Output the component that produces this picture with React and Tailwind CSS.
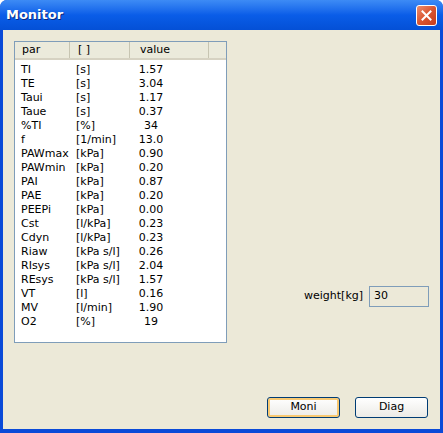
import React from 'react';

const rows = [
  ['TI', '[s]', '1.57'],
  ['TE', '[s]', '3.04'],
  ['Taui', '[s]', '1.17'],
  ['Taue', '[s]', '0.37'],
  ['%TI', '[%]', '34'],
  ['f', '[1/min]', '13.0'],
  ['PAWmax', '[kPa]', '0.90'],
  ['PAWmin', '[kPa]', '0.20'],
  ['PAI', '[kPa]', '0.87'],
  ['PAE', '[kPa]', '0.20'],
  ['PEEPi', '[kPa]', '0.00'],
  ['Cst', '[l/kPa]', '0.23'],
  ['Cdyn', '[l/kPa]', '0.23'],
  ['Riaw', '[kPa s/l]', '0.26'],
  ['RIsys', '[kPa s/l]', '2.04'],
  ['REsys', '[kPa s/l]', '1.57'],
  ['VT', '[l]', '0.16'],
  ['MV', '[l/min]', '1.90'],
  ['O2', '[%]', '19'],
];

const App = () => {
  return (
    <div
      className="w-[443px] h-[433px] flex flex-col bg-[#0A4AD8] rounded-t-[7px] overflow-hidden text-[11px] text-black"
      style={{ fontFamily: 'Tahoma, "DejaVu Sans", sans-serif' }}
    >
      {/* title bar */}
      <div className="h-[30px] shrink-0 flex items-center justify-between px-[6px] bg-gradient-to-b from-[#3D8BF5] via-[#0A5DE8] to-[#0450D6]">
        <span
          className="text-white font-bold text-[13px] [text-shadow:1px_1px_0_#0A2A80]"
          style={{ fontFamily: '"Trebuchet MS", "DejaVu Sans", sans-serif' }}
        >
          Monitor
        </span>
        <div className="w-[21px] h-[21px] rounded-[3px] border border-white bg-gradient-to-br from-[#EC8C6C] via-[#DA5530] to-[#C63C1C] flex items-center justify-center">
          <svg width="11" height="11" viewBox="0 0 11 11">
            <path d="M1.5 1.5 L9.5 9.5 M9.5 1.5 L1.5 9.5" stroke="white" strokeWidth="2" strokeLinecap="square" />
          </svg>
        </div>
      </div>

      {/* client area */}
      <div className="flex-1 mx-[3px] mb-[4px] bg-[#ECE9D8] relative flex flex-col">
        <div className="flex flex-1 pt-[11px] pl-[11px]">
          {/* list view */}
          <div className="w-[213px] h-[302px] border border-[#7F9DB9] bg-white flex flex-col">
            <div className="h-[18px] flex items-stretch bg-[#EBEADB] border-b-[2px] border-[#D6D2C2]">
              <div className="w-[55px] pl-[7px] flex items-center border-r border-[#C7C5B2]">par</div>
              <div className="w-[60px] pl-[8px] flex items-center border-r border-[#C7C5B2]">[ ]</div>
              <div className="w-[79px] pl-[10px] flex items-center border-r border-[#C7C5B2]">value</div>
              <div className="flex-1" />
            </div>
            <div className="pt-[2px]">
              {rows.map(([p, u, v]) => (
                <div key={p} className="h-[14px] flex items-center leading-none">
                  <div className="w-[55px] pl-[6px]">{p}</div>
                  <div className="w-[60px] pl-[6px]">{u}</div>
                  <div className="w-[40px] text-center pl-[2px]">{v}</div>
                </div>
              ))}
            </div>
          </div>

          {/* weight */}
          <div className="flex-1 flex flex-col justify-end pb-[80px] pl-[77px]">
            <div className="flex items-center gap-[6px]">
              <span>weight[kg]</span>
              <div className="w-[60px] h-[21px] border border-[#7F9DB9] bg-[#ECE9D8] pl-[4px] flex items-center">30</div>
            </div>
          </div>
        </div>

        {/* buttons */}
        <div className="flex justify-end gap-[15px] pr-[12px] pb-[11px] pt-[10px]">
          <button className="w-[73px] h-[21px] rounded-[3px] border border-[#003C74] bg-gradient-to-b from-[#FFFFFF] to-[#ECEBE6] shadow-[inset_0_0_0_2px_#F8C972]">
            Moni
          </button>
          <button className="w-[73px] h-[21px] rounded-[3px] border border-[#003C74] bg-gradient-to-b from-[#FFFFFF] to-[#ECEBE6]">
            Diag
          </button>
        </div>
      </div>
    </div>
  );
};

export default App;
